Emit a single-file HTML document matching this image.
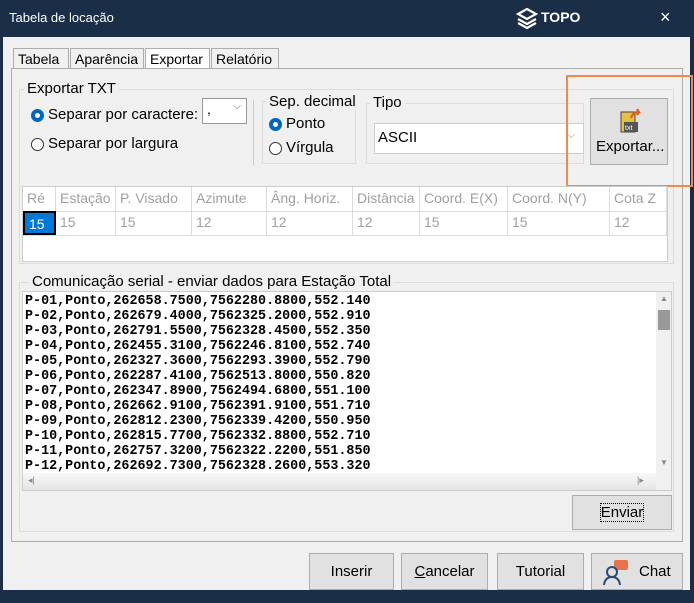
<!DOCTYPE html>
<html><head><meta charset="utf-8"><style>
*{box-sizing:border-box;margin:0;padding:0}
body{width:694px;height:603px;background:#1a2e48;position:relative;overflow:hidden;font-family:"Liberation Sans Narrow","Liberation Sans",sans-serif;font-size:14px;color:#000}
.a{position:absolute}
.body{left:3px;top:37px;width:687px;height:553px;background:#f0f0f0}
.tab{top:48px;height:21px;border:1px solid #adadad;border-bottom:none;background:#f0f0f0;padding:2px 4px 0;font-size:14px;white-space:nowrap}
.panel{left:11px;top:68px;width:672px;height:474px;border:1px solid #adadad;background:#f0f0f0}
.grp{border:1px solid #dcdcdc}
.lbl{background:#f0f0f0;padding:0 3px;white-space:nowrap}
.btn{background:#e1e1e1;border:1px solid #adadad;text-align:center}
.rad{width:13px;height:13px;border-radius:50%;border:1px solid #333;background:#fff}
.rad.on{border:4px solid #0067c0;background:#fff}
.th{top:0;height:24px;border-right:1px solid #dcdcdc;color:#a0a0a0;padding:3px 4px;white-space:nowrap}
.td{top:24px;height:24px;border-right:1px solid #dcdcdc;color:#a0a0a0;padding:3px 4px}
pre{font-family:"Liberation Mono",monospace;font-weight:bold;font-size:13.4px;line-height:15px;letter-spacing:0}
</style></head><body>
<div class="a" style="left:9px;top:10px;color:#fff;font-size:13px">Tabela de locação</div>
<svg class="a" style="left:516px;top:8px" width="22" height="22" viewBox="0 0 22 22"><path d="M11 1l9 5-9 5-9-5z M2 11l9 5 9-5 M2 15l9 5 9-5" fill="none" stroke="#fff" stroke-width="2.2"/></svg>
<div class="a" style="left:541px;top:9px;color:#fff;font-weight:bold;font-size:14px;font-family:'Liberation Sans',sans-serif">TOPO</div>
<div class="a" style="left:660px;top:7px;color:#fff;font-size:18px">×</div>
<div class="a body"></div>
<div class="a tab" style="left:13px;width:56px">Tabela</div>
<div class="a tab" style="left:70px;width:74px">Aparência</div>
<div class="a tab" style="left:145px;width:65px;background:#fff">Exportar</div>
<div class="a tab" style="left:211px;width:68px">Relatório</div>
<div class="a panel"></div>
<div class="a grp" style="left:19px;top:89px;width:655px;height:175px"></div>
<div class="a lbl" style="left:24px;top:80px;font-size:15px">Exportar TXT</div>
<div class="a rad on" style="left:31px;top:109px"></div>
<div class="a" style="left:48px;top:106px;font-size:15px">Separar por caractere:</div>
<div class="a" style="left:202px;top:98px;width:45px;height:26px;background:#fff;border:1px solid #999;padding:2px 4px">,<span style="position:absolute;right:5px;top:2px;font-size:10px;color:#666">⌵</span></div>
<div class="a rad" style="left:31px;top:138px"></div>
<div class="a" style="left:48px;top:135px;font-size:15px">Separar por largura</div>
<div class="a" style="left:253px;top:100px;width:1px;height:65px;background:#ccc"></div>
<div class="a grp" style="left:262px;top:101px;width:94px;height:63px"></div>
<div class="a lbl" style="left:266px;top:93px;font-size:15px">Sep. decimal</div>
<div class="a rad on" style="left:269px;top:118px"></div>
<div class="a" style="left:286px;top:115px;font-size:15px">Ponto</div>
<div class="a rad" style="left:269px;top:142px"></div>
<div class="a" style="left:286px;top:139px;font-size:15px">Vírgula</div>
<div class="a grp" style="left:366px;top:103px;width:218px;height:61px"></div>
<div class="a lbl" style="left:370px;top:94px;font-size:15px">Tipo</div>
<div class="a" style="left:374px;top:123px;width:210px;height:31px;background:#fff;border:1px solid #ccc;padding:5px 3px;font-size:15px">ASCII<span style="position:absolute;right:8px;top:6px;font-size:10px;color:#888">⌵</span></div>
<div class="a btn" style="left:590px;top:98px;width:78px;height:67px"></div>
<svg class="a" style="left:619px;top:108px" width="24" height="26" viewBox="0 0 24 26"><rect x="2" y="4" width="14" height="20" fill="#e8c040" stroke="#444"/><rect x="5" y="14" width="14" height="10" fill="#555"/><text x="6" y="22" font-size="7" fill="#fff" font-family="Liberation Sans">txt</text><path d="M12 10q2-6 8-6l-2-3m2 3-2 3" stroke="#e06020" stroke-width="2.2" fill="none"/></svg>
<div class="a" style="left:596px;top:138px;font-size:15px">Exportar...</div>
<div class="a" style="left:566px;top:75px;width:127px;height:112px;border:2px solid #f08a4b"></div>
<div class="a" style="left:22px;top:186px;width:646px;height:76px;background:#fff;border:1px solid #ccc">
<div class="a" style="left:0;top:0;width:644px;height:49px;border-bottom:1px solid #dcdcdc"></div>
<div class="a" style="left:0;top:24px;width:644px;height:1px;background:#dcdcdc"></div>
<div class="a th" style="left:0;width:33px">Ré</div><div class="a th" style="left:33px;width:60px">Estação</div><div class="a th" style="left:93px;width:76px">P. Visado</div><div class="a th" style="left:169px;width:75px">Azimute</div><div class="a th" style="left:244px;width:86px">Âng. Horiz.</div><div class="a th" style="left:330px;width:67px">Distância</div><div class="a th" style="left:397px;width:88px">Coord. E(X)</div><div class="a th" style="left:485px;width:102px">Coord. N(Y)</div><div class="a th" style="left:587px;width:57px">Cota Z</div>
<div class="a td" style="left:0;width:33px;background:#0078d7;color:#fff;border:2px solid #000">15</div><div class="a td" style="left:33px;width:60px">15</div><div class="a td" style="left:93px;width:76px">15</div><div class="a td" style="left:169px;width:75px">12</div><div class="a td" style="left:244px;width:86px">12</div><div class="a td" style="left:330px;width:67px">12</div><div class="a td" style="left:397px;width:88px">15</div><div class="a td" style="left:485px;width:102px">15</div><div class="a td" style="left:587px;width:57px">12</div>
</div>
<div class="a grp" style="left:19px;top:282px;width:655px;height:250px"></div>
<div class="a lbl" style="left:29px;top:273px;font-size:15px">Comunicação serial - enviar dados para Estação Total</div>
<div class="a" style="left:22px;top:291px;width:650px;height:200px;background:#fff;border:1px solid #ccc;overflow:hidden">
<pre class="a" style="left:2px;top:2px">P-01,Ponto,262658.7500,7562280.8800,552.140
P-02,Ponto,262679.4000,7562325.2000,552.910
P-03,Ponto,262791.5500,7562328.4500,552.350
P-04,Ponto,262455.3100,7562246.8100,552.740
P-05,Ponto,262327.3600,7562293.3900,552.790
P-06,Ponto,262287.4100,7562513.8000,550.820
P-07,Ponto,262347.8900,7562494.6800,551.100
P-08,Ponto,262662.9100,7562391.9100,551.710
P-09,Ponto,262812.2300,7562339.4200,550.950
P-10,Ponto,262815.7700,7562332.8800,552.710
P-11,Ponto,262757.3200,7562322.2200,551.850
P-12,Ponto,262692.7300,7562328.2600,553.320</pre>
<div class="a" style="left:633px;top:0;width:16px;height:181px;background:#f0f0f0"><div class="a" style="left:2px;top:18px;width:12px;height:20px;background:#999"></div><div class="a" style="left:4px;top:2px;font-size:8px;color:#888">▲</div><div class="a" style="left:4px;top:166px;font-size:8px;color:#888">▼</div></div>
<div class="a" style="left:0;top:181px;width:633px;height:18px;background:linear-gradient(#f8f8f8,#e4e4e4)"><div class="a" style="left:5px;top:2px;font-size:9px;color:#888">◂|</div><div class="a" style="left:614px;top:2px;font-size:9px;color:#888">|▸</div></div>
<div class="a" style="left:633px;top:181px;width:16px;height:18px;background:#f0f0f0"></div>
</div>
<div class="a btn" style="left:572px;top:495px;width:100px;height:35px;padding-top:8px;font-size:15px"><span style="border:1px dotted #000">Enviar</span></div>
<div class="a btn" style="left:309px;top:553px;width:85px;height:37px;padding-top:9px;font-size:15px">Inserir</div>
<div class="a btn" style="left:401px;top:553px;width:87px;height:37px;padding-top:9px;font-size:15px"><u>C</u>ancelar</div>
<div class="a btn" style="left:497px;top:553px;width:87px;height:37px;padding-top:9px;font-size:15px">Tutorial</div>
<div class="a btn" style="left:591px;top:553px;width:92px;height:37px;padding-top:9px;font-size:15px;text-align:left;padding-left:47px">Chat</div>
<svg class="a" style="left:598px;top:558px" width="38" height="28" viewBox="0 0 38 28"><rect x="16" y="2" width="14" height="10" rx="2" fill="#e8734a"/><circle cx="14" cy="14" r="5" fill="none" stroke="#2a4a7a" stroke-width="2"/><path d="M6 27q1-8 8-8t8 8" fill="none" stroke="#2a4a7a" stroke-width="2"/></svg>
</body></html>
